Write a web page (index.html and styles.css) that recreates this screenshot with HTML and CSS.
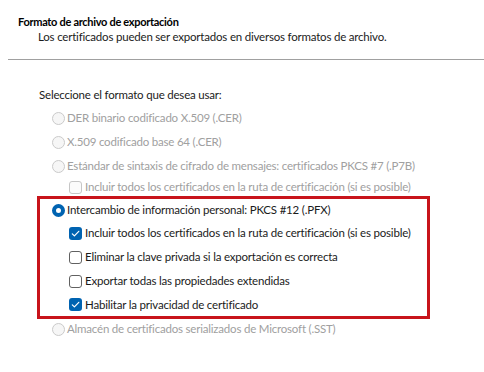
FILE: index.html
```html
<!DOCTYPE html>
<html lang="es">
<head>
<meta charset="utf-8">
<title>Formato de archivo de exportación</title>
<link rel="stylesheet" href="styles.css">
</head>
<body>
<div class="page">
  <div class="header">
    <div class="title">Formato de archivo de exportación</div>
    <div class="subtitle">Los certificados pueden ser exportados en diversos formatos de archivo.</div>
  </div>
  <div class="sep"></div>
  <div class="prompt">Seleccione el formato que desea usar:</div>
  <div class="options top">
    <div class="row disabled"><span class="radio"></span><span class="txt">DER binario codificado X.509 (.CER)</span></div>
    <div class="row disabled"><span class="radio"></span><span class="txt">X.509 codificado base 64 (.CER)</span></div>
    <div class="row disabled"><span class="radio"></span><span class="txt">Estándar de sintaxis de cifrado de mensajes: certificados PKCS #7 (.P7B)</span></div>
    <div class="row sub short disabled"><span class="check"></span><span class="txt">Incluir todos los certificados en la ruta de certificación (si es posible)</span></div>
  </div>
  <div class="box">
    <div class="row first"><span class="radio on"></span><span class="txt">Intercambio de información personal: PKCS #12 (.PFX)</span></div>
    <div class="row sub"><span class="check on"><svg viewBox="0 0 13 13" width="13" height="13"><path d="M3.3 6.8 L5.4 8.9 L9.8 4.3" fill="none" stroke="#fff" stroke-width="1.2" stroke-linecap="round" stroke-linejoin="round"/></svg></span><span class="txt">Incluir todos los certificados en la ruta de certificación (si es posible)</span></div>
    <div class="row sub"><span class="check"></span><span class="txt">Eliminar la clave privada si la exportación es correcta</span></div>
    <div class="row sub"><span class="check"></span><span class="txt">Exportar todas las propiedades extendidas</span></div>
    <div class="row sub last"><span class="check on"><svg viewBox="0 0 13 13" width="13" height="13"><path d="M3.3 6.8 L5.4 8.9 L9.8 4.3" fill="none" stroke="#fff" stroke-width="1.2" stroke-linecap="round" stroke-linejoin="round"/></svg></span><span class="txt">Habilitar la privacidad de certificado</span></div>
  </div>
  <div class="options">
    <div class="row low disabled"><span class="radio"></span><span class="txt">Almacén de certificados serializados de Microsoft (.SST)</span></div>
  </div>
</div>
</body>
</html>
```
FILE: styles.css
```css
html, body {
  margin: 0;
  padding: 0;
  background: #ffffff;
}
body {
  width: 484px;
  height: 372px;
  overflow: hidden;
  font-family: Lato, "Noto Sans", sans-serif;
  font-size: 11.5px;
  letter-spacing: -0.2px;
  color: #1b1b1b;
}
.header {
  padding-top: 14px;
  padding-left: 18px;
}
.title {
  font-weight: bold;
  font-size: 11px;
  letter-spacing: -0.3px;
  line-height: 15px;
  color: #000;
}
.subtitle {
  padding-left: 20px;
  line-height: 15px;
}
.sep {
  margin: 15px 0 0 8px;
  height: 1px;
  background: #a0a0a0;
}
.prompt {
  margin: 27px 0 0 39px;
  line-height: 16px;
}
.options {
  padding-left: 52px;
}
.options.top {
  margin-top: 3px;
}
.row {
  display: flex;
  align-items: center;
  height: 24px;
  white-space: nowrap;
}
.row.short {
  height: 18px;
}
.row.low {
  height: 20px;
}
.row.first {
  height: 22px;
}
.row.last {
  height: 23px;
}
.row.sub {
  padding-left: 17px;
}
.txt {
  line-height: 16px;
}
.disabled .txt {
  color: #a0a0a0;
}
.radio {
  box-sizing: border-box;
  width: 13px;
  height: 13px;
  border-radius: 50%;
  border: 1px solid #cacaca;
  background: #f6f6f6;
  margin-right: 2px;
  flex: none;
}
.radio.on {
  border: 4px solid #0063b1;
  background: #ffffff;
}
.check {
  box-sizing: border-box;
  width: 13px;
  height: 13px;
  border-radius: 3px;
  border: 1px solid #616161;
  background: #ffffff;
  margin-right: 3px;
  flex: none;
  display: flex;
}
.disabled .check {
  border-color: #c6c6c6;
  background: #fbfbfb;
}
.check.on {
  border: none;
  background: #0063b1;
}
.box {
  margin-left: 37px;
  width: 393px;
  box-sizing: border-box;
  border: 3px solid #c8141b;
  padding-left: 12px;
}
```
